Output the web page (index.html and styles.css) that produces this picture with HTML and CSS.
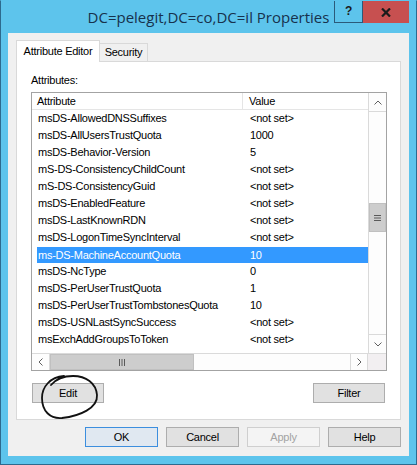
FILE: index.html
```html
<!DOCTYPE html>
<html lang="en">
<head>
<meta charset="UTF-8" />
<title>DC=pelegit,DC=co,DC=il Properties</title>
<link rel="stylesheet" href="styles.css">
</head>
<body>
  <div class="window">
    <div class="titlebar">
      <div class="title">DC=pelegit,DC=co,DC=il Properties</div>
      <div class="caption">
        <div class="cap-help">?</div>
        <div class="cap-close">
          <svg width="10" height="9" viewBox="0 0 10 9"><path d="M1 0.5 L9 8.5 M9 0.5 L1 8.5" stroke="#1b1b1b" stroke-width="2.2" fill="none"/></svg>
        </div>
      </div>
    </div>

    <div class="client">
      <div class="tabs">
        <div class="tab active">Attribute Editor</div>
        <div class="tab">Security</div>
      </div>
      <div class="panel">
        <div class="label">Attributes:</div>
        <div class="listbox">
          <div class="list-main">
            <div class="list-body">
              <div class="list-header">
                <div class="h-attr">Attribute</div>
                <div class="h-val">Value</div>
              </div>
              <div class="row"><div class="c-attr">msDS-AllowedDNSSuffixes</div><div class="c-val">&lt;not set&gt;</div></div>
              <div class="row"><div class="c-attr">msDS-AllUsersTrustQuota</div><div class="c-val">1000</div></div>
              <div class="row"><div class="c-attr">msDS-Behavior-Version</div><div class="c-val">5</div></div>
              <div class="row"><div class="c-attr">mS-DS-ConsistencyChildCount</div><div class="c-val">&lt;not set&gt;</div></div>
              <div class="row"><div class="c-attr">mS-DS-ConsistencyGuid</div><div class="c-val">&lt;not set&gt;</div></div>
              <div class="row"><div class="c-attr">msDS-EnabledFeature</div><div class="c-val">&lt;not set&gt;</div></div>
              <div class="row"><div class="c-attr">msDS-LastKnownRDN</div><div class="c-val">&lt;not set&gt;</div></div>
              <div class="row"><div class="c-attr">msDS-LogonTimeSyncInterval</div><div class="c-val">&lt;not set&gt;</div></div>
              <div class="row selected"><div class="c-attr">ms-DS-MachineAccountQuota</div><div class="c-val">10</div></div>
              <div class="row"><div class="c-attr">msDS-NcType</div><div class="c-val">0</div></div>
              <div class="row"><div class="c-attr">msDS-PerUserTrustQuota</div><div class="c-val">1</div></div>
              <div class="row"><div class="c-attr">msDS-PerUserTrustTombstonesQuota</div><div class="c-val">10</div></div>
              <div class="row"><div class="c-attr">msDS-USNLastSyncSuccess</div><div class="c-val">&lt;not set&gt;</div></div>
              <div class="row"><div class="c-attr">msExchAddGroupsToToken</div><div class="c-val">&lt;not set&gt;</div></div>
            </div>
            <div class="vscroll">
              <div class="sb-btn sb-up">
                <svg width="8" height="5" viewBox="0 0 8 5"><polyline points="0.5,4.5 4,1 7.5,4.5" stroke="#606060" fill="none"/></svg>
              </div>
              <div class="sb-track">
                <div class="vthumb">
                  <svg width="7" height="6" viewBox="0 0 7 6"><path d="M0 0.5 H7 M0 3 H7 M0 5.5 H7" stroke="#5a5a5a"/></svg>
                </div>
              </div>
              <div class="sb-btn sb-down">
                <svg width="8" height="5" viewBox="0 0 8 5"><polyline points="0.5,0.5 4,4 7.5,0.5" stroke="#606060" fill="none"/></svg>
              </div>
            </div>
          </div>
          <div class="hscroll">
            <div class="hb-btn hb-left">
              <svg width="5" height="8" viewBox="0 0 5 8"><polyline points="4.5,0.5 1,4 4.5,7.5" stroke="#606060" fill="none"/></svg>
            </div>
            <div class="hthumb">
              <svg width="6" height="7" viewBox="0 0 6 7"><path d="M0.5 0 V7 M3 0 V7 M5.5 0 V7" stroke="#5a5a5a"/></svg>
            </div>
            <div class="htrack"></div>
            <div class="hb-btn hb-right">
              <svg width="5" height="8" viewBox="0 0 5 8"><polyline points="0.5,0.5 4,4 0.5,7.5" stroke="#606060" fill="none"/></svg>
            </div>
            <div class="corner"></div>
          </div>
        </div>
        <div class="panel-actions">
          <button class="btn">Edit</button>
          <button class="btn">Filter</button>
        </div>
      </div>
      <div class="dialog-actions">
        <button class="btn default">OK</button>
        <button class="btn">Cancel</button>
        <button class="btn" disabled>Apply</button>
        <button class="btn">Help</button>
      </div>
    </div>

    <!-- pen mark drawn over the Edit button -->
    <svg class="scribble" width="417" height="465" viewBox="0 0 417 465">
      <path d="M64 376 C50 377, 42 387, 42 398 C42 411, 50 419, 62 418 C80 416, 98 408, 97 395 C96 383, 86 376, 73 376 C64 376, 56 379, 51 385" stroke="#111" stroke-width="1.8" fill="none" stroke-linecap="round"/>
    </svg>
  </div>
</body>
</html>
```

FILE: styles.css
```css
body {
  margin: 0;
  font-family: "Liberation Sans", Arial, sans-serif;
  font-size: 11px;
  letter-spacing: -0.25px;
  color: #000;
}
.window {
  position: relative;
  width: 417px;
  height: 465px;
  box-sizing: border-box;
  background: #5dc4ec;
  border: 1px solid #2d6a8e;
  border-top-color: #5dc4ec;
}
.titlebar {
  height: 32px;
  display: grid;
  grid-template-columns: 1fr auto 1fr;
}
.title {
  grid-column: 2;
  font-family: "Open Sans", "Noto Sans", sans-serif;
  font-size: 15px;
  letter-spacing: 0;
  line-height: 20px;
  padding-top: 6px;
  color: #17324c;
  white-space: nowrap;
}
.caption {
  grid-column: 3;
  justify-self: end;
  align-self: start;
  display: flex;
  margin-right: 7px;
}
.cap-help {
  width: 29px;
  height: 22px;
  box-sizing: border-box;
  border: 1px solid #2b5a7a;
  border-top: none;
  font-weight: 700;
  font-size: 12px;
  line-height: 20px;
  text-align: center;
  color: #1b1b1b;
}
.cap-close {
  width: 46px;
  height: 22px;
  background: #c75050;
  display: flex;
  align-items: center;
  justify-content: center;
}
.client {
  margin: 0 7px;
  height: 423px;
  box-sizing: border-box;
  background: #f0f0f0;
  padding: 7px 8px 0 8px;
}
.tabs {
  display: flex;
  align-items: flex-end;
  height: 21px;
}
.tab {
  box-sizing: border-box;
  border: 1px solid #d9d9d9;
  border-bottom: none;
  text-align: center;
}
.tab.active {
  width: 84px;
  height: 22px;
  line-height: 20px;
  margin-bottom: -1px;
  background: #fff;
  position: relative;
  z-index: 1;
}
.tab:not(.active) {
  width: 48px;
  height: 18px;
  line-height: 17px;
  border-left: none;
  background: #f0f0f0;
}
.panel {
  height: 359px;
  box-sizing: border-box;
  border: 1px solid #d9d9d9;
  background: #fff;
  padding: 11px 13px 0 14px;
}
.label {
  line-height: 14px;
}
.listbox {
  margin-top: 5px;
  height: 279px;
  box-sizing: border-box;
  border: 1px solid #a3a3a3;
  display: flex;
  flex-direction: column;
}
.list-main {
  flex: 1;
  display: flex;
  min-height: 0;
}
.list-body {
  flex: 1;
  overflow: hidden;
}
.list-header {
  display: flex;
  height: 16px;
  line-height: 16px;
  border-bottom: 1px solid #e5e5e5;
}
.h-attr {
  width: 211px;
  box-sizing: border-box;
  padding-left: 5px;
  border-right: 1px solid #e5e5e5;
}
.h-val {
  padding-left: 6px;
}
.row {
  display: flex;
  height: 17px;
  line-height: 17px;
  margin-left: 5px;
  white-space: nowrap;
}
.row.selected {
  height: 16px;
  line-height: 16px;
  border-top: 1px solid #fff;
  background: #3399ff;
  color: #fff;
}
.c-attr {
  width: 206px;
  box-sizing: border-box;
  padding-left: 1px;
}
.c-val {
  padding-left: 7px;
}
.vscroll {
  width: 18px;
  box-sizing: border-box;
  border-left: 1px solid #dadada;
  display: flex;
  flex-direction: column;
  background: #fdfdfd;
}
.sb-btn {
  height: 18px;
  display: flex;
  align-items: center;
  justify-content: center;
}
.sb-up {
  border-bottom: 1px solid #dadada;
}
.sb-down {
  border-top: 1px solid #dadada;
}
.sb-track {
  flex: 1;
}
.vthumb {
  margin-top: 91px;
  height: 29px;
  box-sizing: border-box;
  background: #cdcdcd;
  border: 1px solid #c0c0c0;
  display: flex;
  align-items: center;
  justify-content: center;
}
.hscroll {
  height: 17px;
  box-sizing: border-box;
  border-top: 1px solid #dadada;
  display: flex;
  background: #fdfdfd;
}
.hb-btn {
  width: 18px;
  box-sizing: border-box;
  display: flex;
  align-items: center;
  justify-content: center;
}
.hb-left {
  border-right: 1px solid #dadada;
}
.hb-right {
  width: 17px;
  border-left: 1px solid #dadada;
}
.hthumb {
  width: 144px;
  box-sizing: border-box;
  background: #cdcdcd;
  border: 1px solid #c0c0c0;
  display: flex;
  align-items: center;
  justify-content: center;
}
.htrack {
  flex: 1;
}
.corner {
  width: 18px;
  background: #f2eff1;
  border-left: 1px solid #dadada;
}
.panel-actions {
  display: flex;
  justify-content: space-between;
  margin-top: 12px;
  padding: 0 2px 0 1px;
}
.btn {
  width: 72px;
  height: 20px;
  box-sizing: border-box;
  padding: 0;
  font-family: inherit;
  font-size: 11px;
  letter-spacing: -0.25px;
  color: #000;
  background: #e1e1e1;
  border: 1px solid #adadad;
}
.dialog-actions {
  display: flex;
  justify-content: flex-end;
  gap: 8px;
  margin-top: 7px;
}
.dialog-actions .btn {
  width: 73px;
}
.btn.default {
  background: #e0e8f1;
  border-color: #3c8ede;
}
.btn:disabled {
  background: #f4f4f4;
  border-color: #cfcfcf;
  color: #a3a3a3;
}
.scribble {
  position: absolute;
  left: -1px;
  top: -1px;
  pointer-events: none;
}
```
